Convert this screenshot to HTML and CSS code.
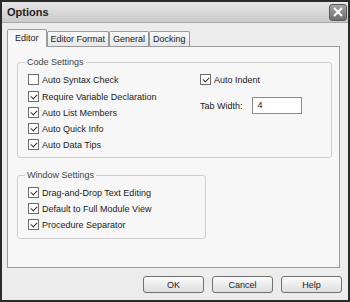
FILE: index.html
```html
<!DOCTYPE html>
<html lang="en">
<head>
    <meta charset="UTF-8">
    <title>Options</title>
    <link rel="stylesheet" href="styles.css">
</head>
<body>
    <div class="window">
        <div class="titlebar">
            <span class="title">Options</span>
            <span class="close">
                <svg width="16" height="14" viewBox="0 0 16 14">
                    <path d="M4 3 L12 11 M12 3 L4 11" stroke="#fff" stroke-width="2" fill="none"/>
                </svg>
            </span>
        </div>

        <div class="tabs">
            <div class="tab active">Editor</div>
            <div class="tab">Editor Format</div>
            <div class="tab">General</div>
            <div class="tab">Docking</div>
        </div>

        <div class="panel">
            <fieldset class="group code">
                <legend>Code Settings</legend>
                <div class="cols">
                    <div class="col">
                        <label class="check"><span class="box"></span>Auto Syntax Check</label>
                        <label class="check"><span class="box on"></span>Require Variable Declaration</label>
                        <label class="check"><span class="box on"></span>Auto List Members</label>
                        <label class="check"><span class="box on"></span>Auto Quick Info</label>
                        <label class="check"><span class="box on"></span>Auto Data Tips</label>
                    </div>
                    <div class="col right">
                        <label class="check"><span class="box on"></span>Auto Indent</label>
                        <div class="field">
                            <span>Tab Width:</span>
                            <span class="input">4</span>
                        </div>
                    </div>
                </div>
            </fieldset>

            <fieldset class="group window-set">
                <legend>Window Settings</legend>
                <label class="check"><span class="box on"></span>Drag-and-Drop Text Editing</label>
                <label class="check"><span class="box on"></span>Default to Full Module View</label>
                <label class="check"><span class="box on"></span>Procedure Separator</label>
            </fieldset>
        </div>

        <div class="buttons">
            <button>OK</button>
            <button>Cancel</button>
            <button>Help</button>
        </div>
    </div>
</body>
</html>
```

FILE: styles.css
```css
body {
    margin: 0;
    font-family: "Liberation Sans", Arial, sans-serif;
    font-size: 9px;
    color: #1a1a1a;
}
.window {
    box-sizing: border-box;
    width: 350px;
    height: 302px;
    border: 2px solid #2a2a2a;
    background-color: #ececec;
}
.titlebar {
    display: flex;
    justify-content: space-between;
    align-items: center;
    height: 20px;
    padding: 0 1px 0 5px;
    background: linear-gradient(#e6e6e6, #cbcbcb);
    border-bottom: 1px solid #a8a8a8;
}
.title {
    font-size: 11px;
    font-weight: bold;
    color: #222;
}
.close {
    display: flex;
    align-items: center;
    justify-content: center;
    width: 16px;
    height: 15px;
    border-radius: 3px;
    background: linear-gradient(#a4a4a4, #6e6e6e);
    border: 1px solid #5a5a5a;
}
.tabs {
    display: flex;
    align-items: flex-end;
    height: 23px;
    padding-left: 5px;
}
.tab {
    height: 13px;
    padding: 1px 3px 0;
    border: 1px solid #9a9a9a;
    border-bottom: none;
    border-radius: 2px 2px 0 0;
    background: linear-gradient(#fafafa, #e6e6e6);
    line-height: 13px;
}
.tab.active {
    height: 17px;
    padding: 0 7px;
    background: #f7f7f7;
    line-height: 16px;
    position: relative;
    top: 1px;
}
.panel {
    box-sizing: border-box;
    height: 222px;
    margin: 0 8px 0 5px;
    padding: 10px 7px 0 9px;
    border: 1px solid #9a9a9a;
    background-color: #f7f7f7;
}
.group {
    box-sizing: border-box;
    min-width: 0;
    margin: 0;
    padding: 6px 0 0 10px;
    border: 1px solid #cfcfcf;
    border-radius: 3px;
}
.group legend {
    padding: 0 2px;
    margin-left: -3px;
    color: #444;
}
.code {
    height: 101px;
}
.window-set {
    display: flex;
    flex-direction: column;
    gap: 3px;
    width: 189px;
    height: 69px;
    margin-top: 12px;
}
.cols {
    display: flex;
}
.col {
    display: flex;
    flex-direction: column;
    gap: 3px;
    width: 172px;
}
.col.right {
    width: auto;
    gap: 10px;
}
.check {
    display: flex;
    align-items: center;
    height: 13px;
    gap: 3px;
    white-space: nowrap;
}
.col .check:first-child {
    margin-bottom: 1px;
}
.box {
    box-sizing: border-box;
    width: 11px;
    height: 11px;
    border: 1px solid #6e6e6e;
    background-color: #fff;
    display: flex;
    align-items: center;
    justify-content: center;
}
.box.on::after {
    content: "";
    width: 5px;
    height: 3px;
    border-left: 1.5px solid #333;
    border-bottom: 1.5px solid #333;
    transform: translate(0, -1px) rotate(-45deg);
}
.field {
    display: flex;
    align-items: center;
    gap: 9px;
}
.input {
    box-sizing: border-box;
    width: 50px;
    height: 17px;
    padding: 2px 5px;
    border: 1px solid #8a8a8a;
    background-color: #fff;
}
.buttons {
    display: flex;
    justify-content: flex-end;
    gap: 8px;
    padding: 8px 6px 0 0;
}
button {
    width: 61px;
    height: 17px;
    padding: 0;
    font-family: inherit;
    font-size: 9px;
    color: #222;
    border: 1px solid #707070;
    border-radius: 3px;
    background: linear-gradient(#fafafa, #dedede);
}
```
